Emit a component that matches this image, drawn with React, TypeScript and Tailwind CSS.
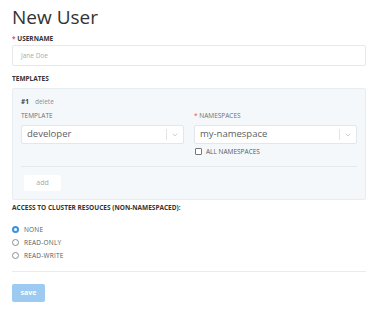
import { ChevronDown } from 'lucide-react'

// Select box with a separator and a chevron
function FakeSelect({ value }: { value: string }) {
  return (
    <div className="flex h-[19px] items-center rounded-[2px] border border-[#e3e6ea] bg-white">
      <span className="flex-1 pl-[5px] text-[9.5px] text-[#5a5f66]">{value}</span>
      <span className="h-[11px] w-px bg-[#e1e4e8]" />
      <span className="flex w-[16px] justify-center">
        <ChevronDown className="h-[8px] w-[8px] text-[#b5bac0]" strokeWidth={2} />
      </span>
    </div>
  )
}

function Radio({ label, checked }: { label: string; checked?: boolean }) {
  return (
    <label className="flex h-[13px] items-center gap-[5px]">
      <span
        className={
          checked
            ? 'flex h-[7px] w-[7px] items-center justify-center rounded-full bg-[#3d8fe0]'
            : 'h-[7px] w-[7px] rounded-full border border-[#8a8f96] bg-white'
        }
      >
        {checked && <span className="h-[3px] w-[3px] rounded-full bg-white" />}
      </span>
      <span className="text-[6.5px] tracking-[0.2px] text-[#555b62]">{label}</span>
    </label>
  )
}

export default function App() {
  return (
    <div
      className="h-[316px] w-[381px] bg-white pl-[12px] pr-[15px] text-[#333]"
      style={{ fontFamily: '"Open Sans", "Noto Sans", sans-serif' }}
    >
      <h1 className="pt-[5px] text-[19px] leading-[24px] text-[#333]">New User</h1>

      <div className="mt-[6px] text-[6.5px] font-bold leading-[8px] text-[#333]">
        <span className="text-[#e5544b]">* </span>USERNAME
      </div>
      <div className="mt-[2px] flex h-[21px] items-center rounded-[2px] border border-[#e6e8eb] pl-[8px] text-[6.5px] text-[#a9adb2]">
        Jane Doe
      </div>

      <div className="mt-[9px] text-[6.5px] font-bold leading-[8px] text-[#333]">TEMPLATES</div>

      <div className="mt-[5px] h-[112px] rounded-[2px] border border-[#e8edf2] bg-[#f5f8fb] px-[8px]">
        <div className="flex items-center gap-[6px] pt-[9px] leading-[8px]">
          <span className="text-[6.5px] font-bold text-[#444]">#1</span>
          <span className="text-[6.5px] text-[#8a8f96]">delete</span>
        </div>

        <div className="mt-[6px] flex gap-[10px]">
          <div className="w-[163px]">
            <div className="text-[6.5px] leading-[8px] text-[#6b7077]">TEMPLATE</div>
            <div className="mt-[5px]">
              <FakeSelect value="developer" />
            </div>
          </div>
          <div className="w-[163px]">
            <div className="text-[6.5px] leading-[8px] text-[#6b7077]">
              <span className="text-[#e5544b]">* </span>NAMESPACES
            </div>
            <div className="mt-[5px]">
              <FakeSelect value="my-namespace" />
            </div>
            <label className="mt-[3px] flex items-center gap-[4px] pl-[1px]">
              <span className="h-[7px] w-[7px] rounded-[1px] border border-[#777] bg-white" />
              <span className="text-[6.5px] text-[#555b62]">ALL NAMESPACES</span>
            </label>
          </div>
        </div>

        <div className="mt-[9px] h-px bg-[#e6eaef]" />

        <button className="ml-[3px] mt-[8px] h-[16px] w-[37px] rounded-[2px] bg-white text-[7px] text-[#a3a8ae]">
          add
        </button>
      </div>

      <div className="mt-[4px] text-[6.5px] font-bold leading-[8px] text-[#333]">
        ACCESS TO CLUSTER RESOUCES (NON-NAMESPACED):
      </div>
      <div className="mt-[11px] flex flex-col">
        <Radio label="NONE" checked />
        <Radio label="READ-ONLY" />
        <Radio label="READ-WRITE" />
      </div>

      <div className="mt-[9px] h-px bg-[#e8eaed]" />

      <button className="mt-[12px] h-[18px] w-[33px] rounded-[2px] bg-[#9ccaf0] text-[7px] font-bold text-white">
        save
      </button>
    </div>
  )
}
